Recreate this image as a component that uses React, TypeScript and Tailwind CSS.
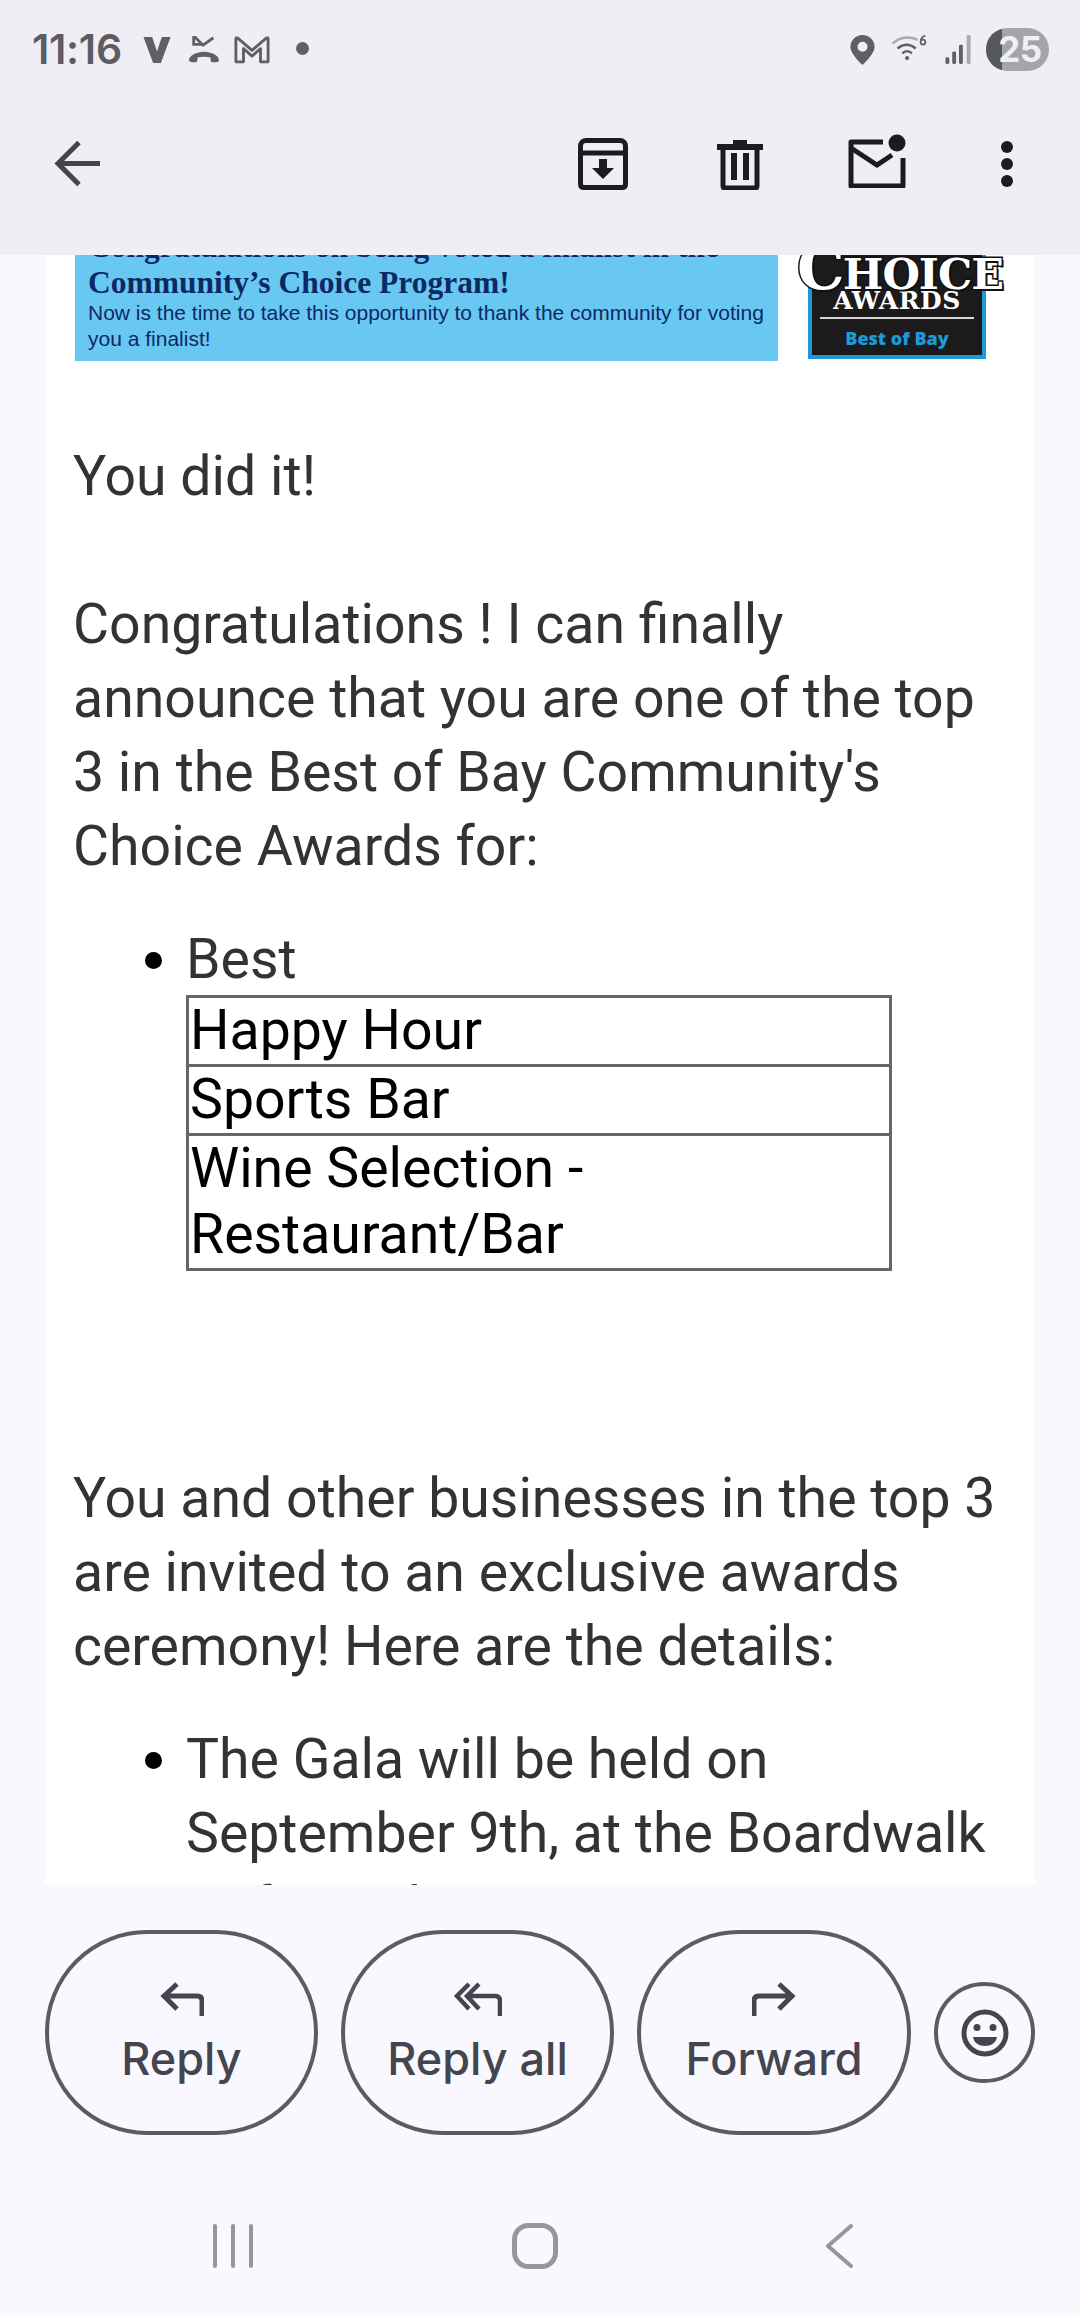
const D = "#1b1b21";
const G = "#5f5f65";
const B = "#44454e";

function StatusBar() {
  return (
    <div className="flex h-[96px] items-start pl-[32px] pr-[31px] pt-[27px]">
      <span className="text-[41px] leading-[44px] font-semibold text-[#5c5c62] font-['Inter','Roboto',sans-serif] tracking-[-0.3px]">11:16</span>
      <svg className="ml-[20px] mt-[8px]" width="30" height="29" viewBox="0 0 30 30">
        <path d="M1 2h9l5 15 5-15h9L19 29h-8z" fill={G} />
      </svg>
      <svg className="ml-[14px] mt-[7px]" width="36" height="30" viewBox="0 0 36 32" fill="none">
        <path d="M7 2v9h9M8 3l9 9 11-8" stroke={G} strokeWidth="3" />
        <path d="M2 28c0-5 8-9 16-9s16 4 16 9c0 2-2 2-3 2h-4c-2 0-2-1-2-3v-2c-4-1-10-1-14 0v2c0 2 0 3-2 3H5c-1 0-3 0-3-2z" fill={G} />
      </svg>
      <svg className="ml-[12px] mt-[8px]" width="36" height="29" viewBox="0 0 38 30" fill="none">
        <path d="M2 28V4q0-2 2-1l15 13L34 3q2-1 2 1v24h-8V14l-9 8-9-8v14z" stroke={G} strokeWidth="3" strokeLinejoin="round" />
      </svg>
      <span className="ml-[26px] mt-[15px] h-[13px] w-[13px] rounded-full bg-[#5f5f65]" />
      <div className="flex-1" />
      <svg className="mt-[8px]" width="25" height="30" viewBox="0 0 25 31">
        <path fillRule="evenodd" d="M12.5 0C5.6 0 0 5.4 0 12.2 0 20 12.5 31 12.5 31S25 20 25 12.2C25 5.400 19.400 0 12.500 0zm0 7a5.200 5.200 0 1 1 0 10.400a5.200 5.200 0 0 1 0-10.400z" fill={G} />
      </svg>
      <svg className="ml-[16px] mt-[8px]" width="37" height="26" viewBox="0 0 37 27" fill="none">
        <path d="M1 9C8 2 18 1 27 5" stroke="#a9a9ae" strokeWidth="2.500" />
        <path d="M6 14c6-5 13-5 19 0M11 19c3-3 7-3 10 0" stroke={G} strokeWidth="2.500" />
        <circle cx="16" cy="24" r="2.200" fill={G} />
        <path d="M35 1c-2 0-5 2-5 6 0 2 1 3 2.500 3S35 9 35 7s-2-3-4.500-1.500" stroke={G} strokeWidth="1.800" />
      </svg>
      <svg className="ml-[17px] mt-[8px]" width="27" height="29" viewBox="0 0 27 30">
        <rect x="0" y="23" width="4" height="7" rx="1.500" fill={G} />
        <rect x="7" y="17" width="4" height="13" rx="1.500" fill={G} />
        <rect x="14" y="10" width="4" height="20" rx="1.500" fill={G} />
        <rect x="22" y="0" width="4" height="30" rx="1.500" fill="#a9a9ae" />
      </svg>
      <div className="relative ml-[14px] mt-[1px] flex h-[43px] w-[63px] items-center justify-center overflow-hidden rounded-full bg-[#a5a5a9]">
        <div className="absolute inset-y-0 left-0 w-[16px] bg-[#58585c]" />
        <span className="relative pl-[5px] text-[35px] font-bold leading-none tracking-[-0.5px] text-[#f0f0f4] font-['Inter','Roboto',sans-serif]">25</span>
      </div>
    </div>
  );
}

function Toolbar() {
  return (
    <div className="flex h-[159px] items-start pt-[44px]">
      <svg className="ml-[54px]" width="48" height="48" viewBox="0 0 48 48" fill="none">
        <path d="M46 23.500H4M25 2.500 4 23.500l21 21" stroke={B} strokeWidth="5" />
      </svg>
      <div className="flex-1" />
      <svg width="50" height="52" viewBox="0 0 50 52" fill="none" className="mr-[89px] -mt-[2px]">
        <path d="M8 2.500h34c3 0 5.500 2.500 5.500 5.500v38q0 3.500-3.500 3.500H6q-3.500 0-3.500-3.500V8C2.500 5 5 2.500 8 2.500z" stroke={D} strokeWidth="5" />
        <path d="M3 15h44" stroke={D} strokeWidth="5" />
        <path d="M21 21h8v9h7L25 41 14 30h7z" fill={D} />
      </svg>
      <svg width="46" height="52" viewBox="0 0 46 52" fill="none" className="mr-[85px] -mt-[2px]">
        <path d="M0 6h16V2h14v4h16v6H0z" fill={D} />
        <path d="M6 10v38q0 2 2 2h30q2 0 2-2V10" stroke={D} strokeWidth="5" />
        <rect x="14" y="15" width="6" height="27" fill={D} />
        <rect x="26" y="15" width="6" height="27" fill={D} />
      </svg>
      <svg width="58" height="54" viewBox="0 0 58 54" fill="none" className="mr-[96px] -mt-[6px]">
        <path d="M35 8H3v44h52V24" stroke={D} strokeWidth="5" strokeLinejoin="round" />
        <path d="M3 14l26 17 15-10" stroke={D} strokeWidth="5" />
        <circle cx="49" cy="9" r="8.500" fill={D} />
      </svg>
      <div className="mr-[68px] flex w-[10px] flex-col items-center gap-[5px] mt-[1px]">
        <span className="h-[12px] w-[12px] shrink-0 rounded-full bg-[#1b1b21]" />
        <span className="h-[12px] w-[12px] shrink-0 rounded-full bg-[#1b1b21]" />
        <span className="h-[12px] w-[12px] shrink-0 rounded-full bg-[#1b1b21]" />
      </div>
    </div>
  );
}

function Banner() {
  return (
    <div className="-mt-[40px] flex h-[149px] items-start pl-[30px]">
      <div className="flex h-[146px] w-[703px] shrink-0 flex-col justify-end bg-[#69c8f2] pb-[9px] pl-[13px] text-[#0b2a63]">
        <div className="font-['Liberation_Serif',serif] text-[31.5px] font-bold leading-[33px] whitespace-nowrap">Congratulations on being voted a finalist in the</div>
        <div className="pt-[3px] font-['Liberation_Serif',serif] text-[31.5px] font-bold leading-[34px] whitespace-nowrap">Community’s Choice Program!</div>
        <div className="font-['Liberation_Sans',sans-serif] text-[21px] leading-[26px]">Now is the time to take this opportunity to thank the community for voting you a finalist!</div>
      </div>
      <div className="relative ml-[30px] mt-[40px] flex h-[104px] w-[178px] shrink-0 flex-col items-center border-[4px] border-t-0 border-[#1b9ad6] bg-[#1c1a1b]">
        <div className="absolute -left-[15px] -top-[17px] whitespace-nowrap font-['DejaVu_Serif',serif] font-bold leading-none text-white [-webkit-text-stroke:3px_#111] [paint-order:stroke_fill] [text-shadow:2px_2px_0_#111]">
          <span className="text-[60px] tracking-[-2px]">C</span><span className="text-[43px] tracking-[-1px]">HOICE</span>
        </div>
        <div className="mt-[34px] font-['DejaVu_Serif',serif] text-[25px] font-bold leading-[24px] tracking-[0.5px] text-white">AWARDS</div>
        <div className="mt-[4px] h-[2px] w-[154px] bg-[#d8d8d8]" />
        <div className="mt-[7px] font-['Open_Sans',sans-serif] text-[18px] font-extrabold leading-[24px] text-[#1c9ad8]">Best of Bay</div>
      </div>
    </div>
  );
}

function Message() {
  return (
    <div className="pl-[28px] pr-[20px] pt-[76px] font-['Roboto',sans-serif] text-[55.4px] leading-[74px] text-[#333]">
      <p>You did it!</p>
      <p className="mt-[74px]">Congratulations ! I can finally announce that you are one of the top 3 in the Best of Bay Community's Choice Awards for:</p>
      <ul className="mt-[39px] list-disc pl-[113px] marker:text-black">
        <li>
          Best
          <table className="-mt-[2px] w-[706px] border-collapse border-[3px] border-[#666] text-black">
            <tbody>
              <tr><td className="border-[3px] border-[#666] px-[1px] leading-[66px]">Happy Hour</td></tr>
              <tr><td className="border-[3px] border-[#666] px-[1px] leading-[66px]">Sports Bar</td></tr>
              <tr><td className="border-[3px] border-[#666] px-[1px] leading-[66px]">Wine Selection -<br />Restaurant/Bar</td></tr>
            </tbody>
          </table>
        </li>
      </ul>
      <p className="mt-[191px]">You and other businesses in the top 3 are invited to an exclusive awards ceremony! Here are the details:</p>
      <ul className="mt-[39px] list-disc pl-[113px] marker:text-black">
        <li>The Gala will be held on September 9th, at the Boardwalk Cafe on the Bay</li>
      </ul>
    </div>
  );
}

function ActionButton({ label, width, icon }: { label: string; width: string; icon: React.ReactNode }) {
  return (
    <div className={`flex h-[205px] flex-col items-center rounded-[102px] border-[4px] border-[#5b5b61] pt-[48px] ${width}`}>
      {icon}
      <span className="mt-[16px] font-['Inter','Roboto',sans-serif] text-[45px] font-medium leading-[54px] text-[#44454e]">{label}</span>
    </div>
  );
}

function Actions() {
  return (
    <div className="flex h-[276px] shrink-0 items-start gap-[23px] pl-[45px] pt-[45px]">
      <ActionButton
        label="Reply"
        width="w-[273px]"
        icon={
          <svg width="44" height="34" viewBox="0 0 44 34" fill="none">
            <path d="M42 34V19q0-5-5-5H4M17 2 4 14l13 13" stroke={B} strokeWidth="5" />
          </svg>
        }
      />
      <ActionButton
        label="Reply all"
        width="w-[273px]"
        icon={
          <svg width="48" height="34" viewBox="0 0 48 34" fill="none">
            <path d="M46 34V19q0-5-5-5H14M25 2 13 14l12 13M15 2 3 14l12 13" stroke={B} strokeWidth="4.500" />
          </svg>
        }
      />
      <ActionButton
        label="Forward"
        width="w-[274px]"
        icon={
          <svg width="44" height="34" viewBox="0 0 44 34" fill="none">
            <path d="M2 34V19q0-5 5-5h33M27 2l13 12-13 13" stroke={B} strokeWidth="5" />
          </svg>
        }
      />
      <div className="mt-[52px] flex h-[101px] w-[101px] shrink-0 items-center justify-center rounded-full border-[4px] border-[#5b5b61]">
        <svg width="48" height="48" viewBox="0 0 48 48" fill="none">
          <circle cx="24" cy="24" r="21" stroke={B} strokeWidth="5" />
          <circle cx="16" cy="18.500" r="3.500" fill={B} />
          <circle cx="32" cy="18.500" r="3.500" fill={B} />
          <path d="M12 28h24c-1 6-6 9-12 9s-11-3-12-9z" fill={B} />
        </svg>
      </div>
    </div>
  );
}

function NavBar() {
  return (
    <div className="flex h-[155px] items-start pt-[63px]">
      <svg className="ml-[212px]" width="42" height="44" viewBox="0 0 42 44" fill="none">
        <path d="M3 2v40M21 2v40M39 2v40" stroke="#96969c" strokeWidth="4" strokeLinecap="round" />
      </svg>
      <svg className="ml-[258px] -mt-[1px]" width="46" height="46" viewBox="0 0 46 46" fill="none">
        <rect x="2.500" y="2.500" width="41" height="41" rx="14" stroke="#96969c" strokeWidth="5" />
      </svg>
      <svg className="ml-[267px]" width="28" height="44" viewBox="0 0 28 44" fill="none">
        <path d="M26 2 3 22l23 20" stroke="#96969c" strokeWidth="4" strokeLinecap="round" strokeLinejoin="round" />
      </svg>
    </div>
  );
}

export default function App() {
  return (
    <div className="flex h-[2316px] w-[1080px] flex-col overflow-hidden bg-[#f8f8fe]">
      <header className="h-[255px] shrink-0 bg-[#eeeef4]">
        <StatusBar />
        <Toolbar />
      </header>
      <main className="mx-[45px] h-[1630px] shrink-0 overflow-hidden bg-white">
        <Banner />
        <Message />
      </main>
      <Actions />
      <NavBar />
    </div>
  );
}
